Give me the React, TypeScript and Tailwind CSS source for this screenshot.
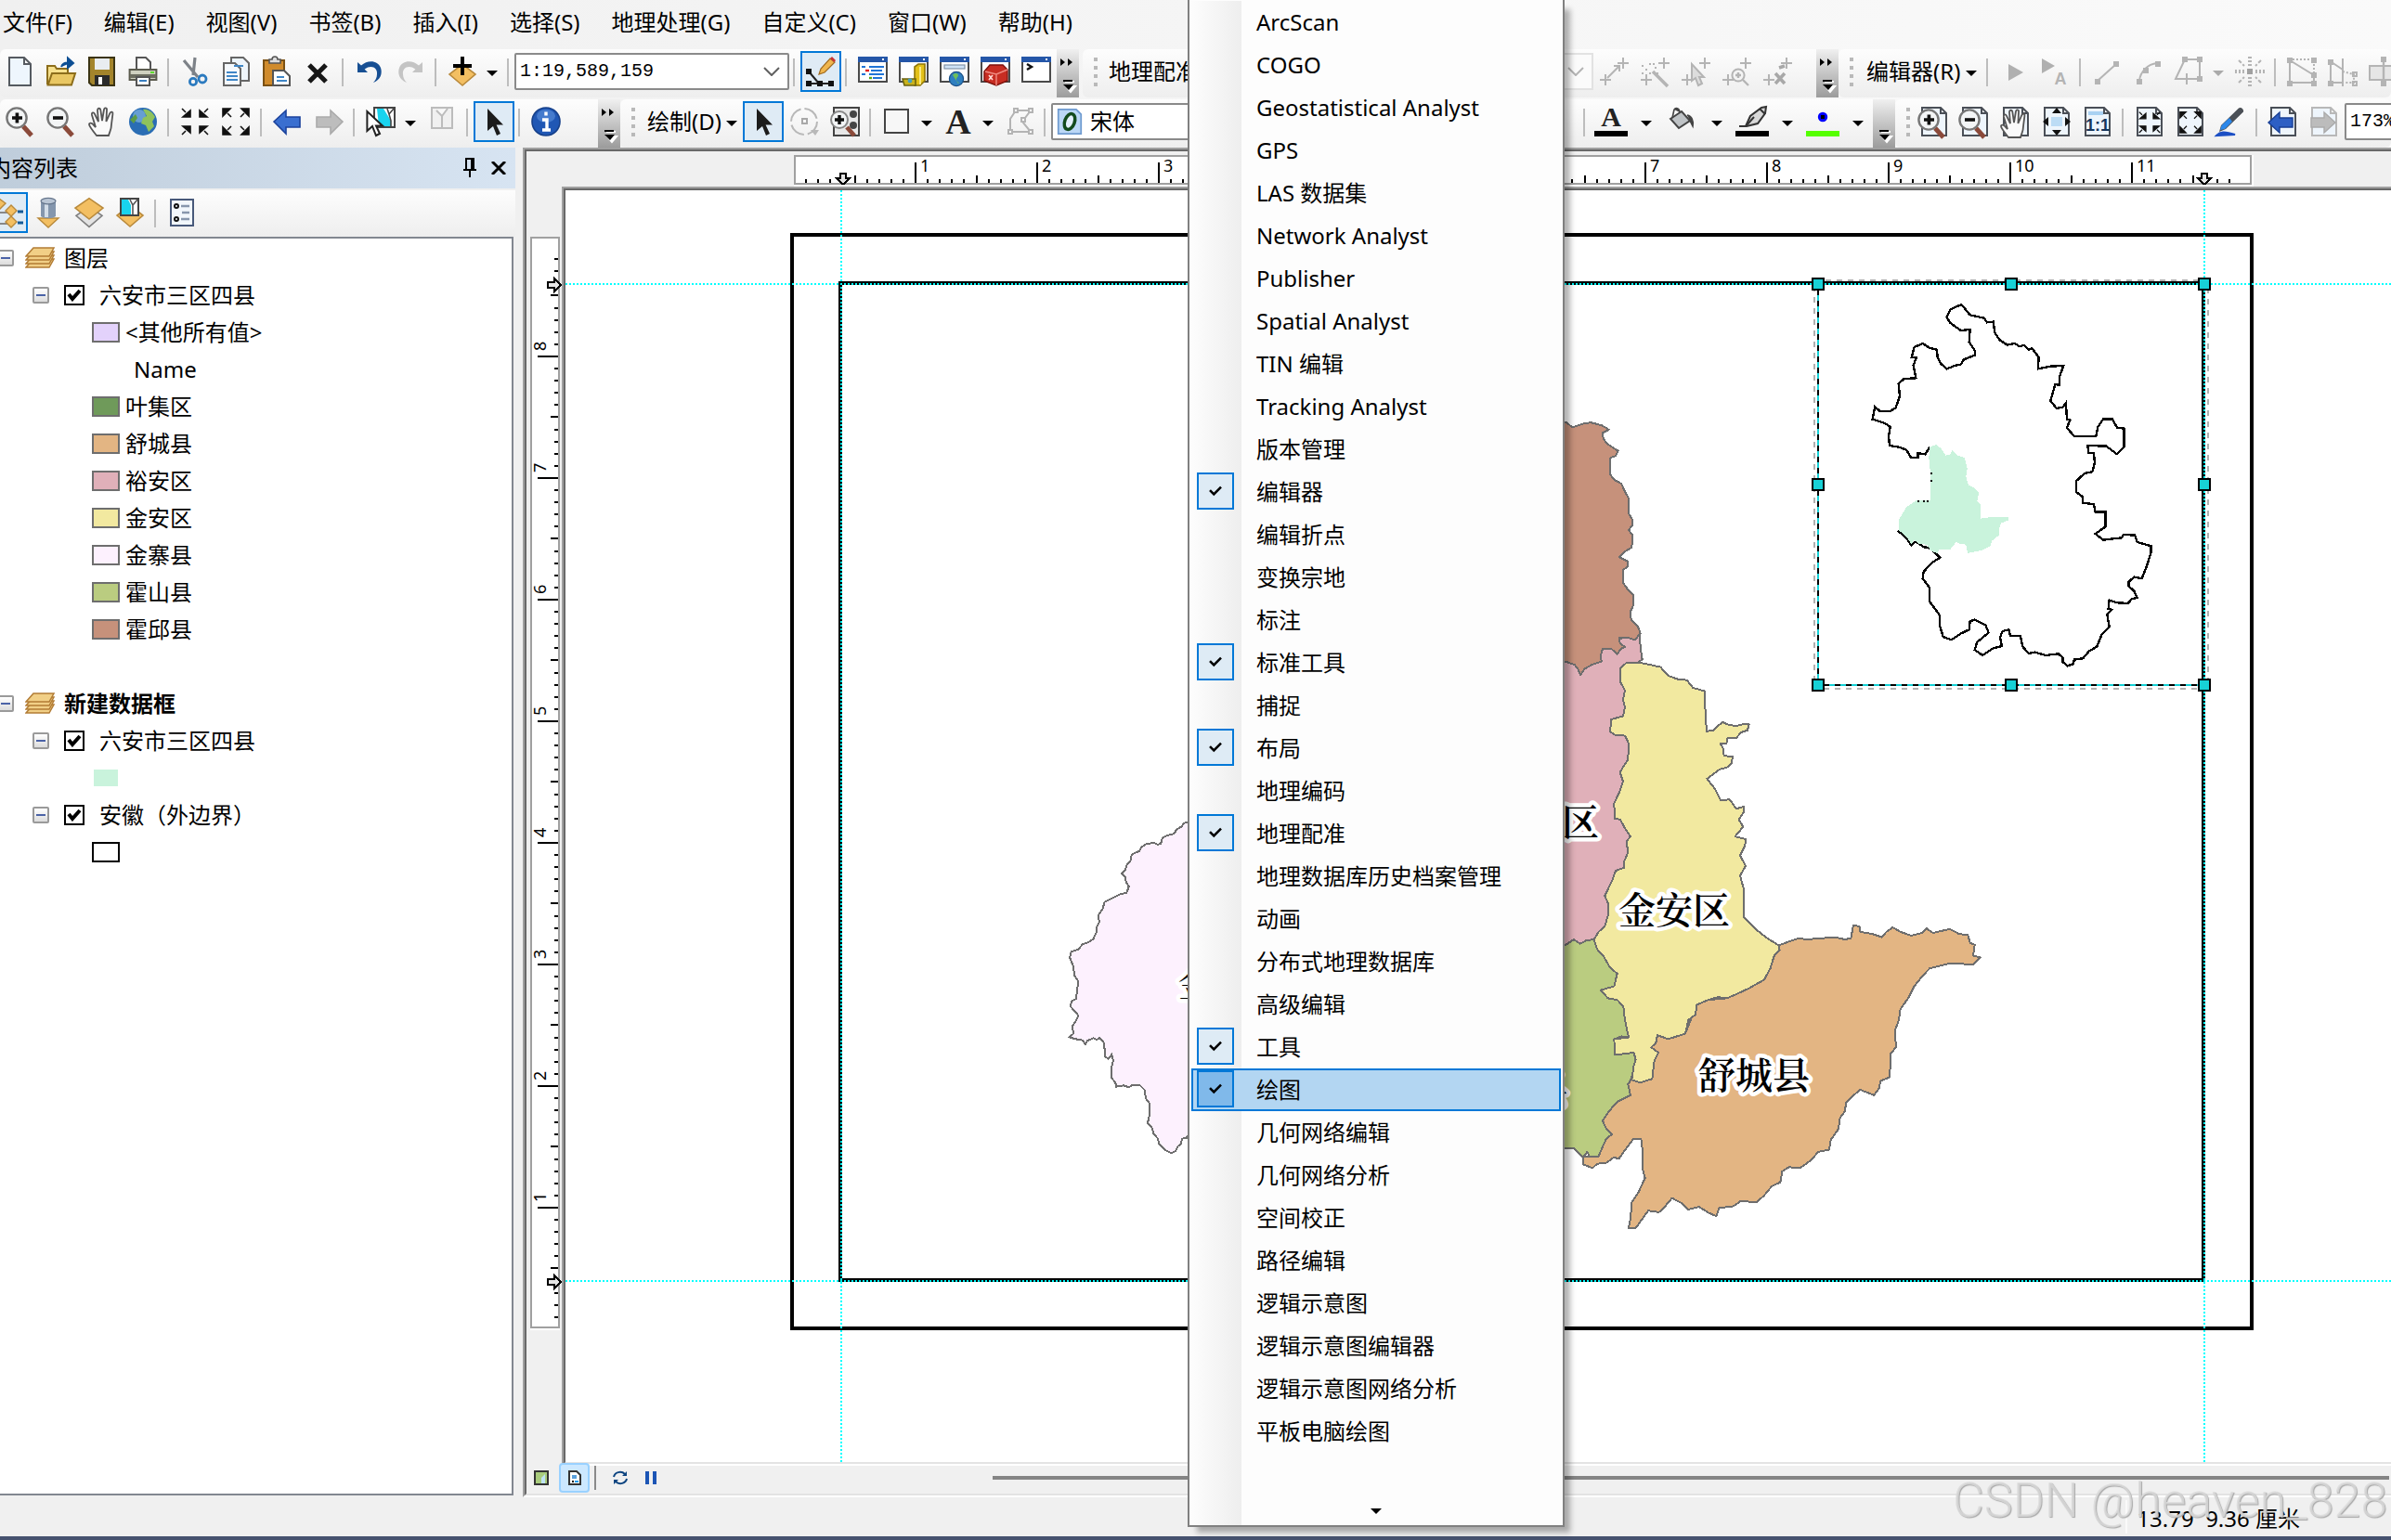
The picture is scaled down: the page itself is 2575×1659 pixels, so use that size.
import type { ReactNode } from "react";
import clsx from "clsx";

const MENUS = ["文件(F)", "编辑(E)", "视图(V)", "书签(B)", "插入(I)", "选择(S)", "地理处理(G)", "自定义(C)", "窗口(W)", "帮助(H)"];

const TOOLBARS: { name: string; checked?: boolean; active?: boolean }[] = [
  { name: "ArcScan" },
  { name: "COGO" },
  { name: "Geostatistical Analyst" },
  { name: "GPS" },
  { name: "LAS 数据集" },
  { name: "Network Analyst" },
  { name: "Publisher" },
  { name: "Spatial Analyst" },
  { name: "TIN 编辑" },
  { name: "Tracking Analyst" },
  { name: "版本管理" },
  { name: "编辑器", checked: true },
  { name: "编辑折点" },
  { name: "变换宗地" },
  { name: "标注" },
  { name: "标准工具", checked: true },
  { name: "捕捉" },
  { name: "布局", checked: true },
  { name: "地理编码" },
  { name: "地理配准", checked: true },
  { name: "地理数据库历史档案管理" },
  { name: "动画" },
  { name: "分布式地理数据库" },
  { name: "高级编辑" },
  { name: "工具", checked: true },
  { name: "绘图", checked: true, active: true },
  { name: "几何网络编辑" },
  { name: "几何网络分析" },
  { name: "空间校正" },
  { name: "路径编辑" },
  { name: "逻辑示意图" },
  { name: "逻辑示意图编辑器" },
  { name: "逻辑示意图网络分析" },
  { name: "平板电脑绘图" },
];

const PageShape = ({ stroke = "#4a4f57" }: { stroke?: string }) => (
  <path d="M1.5 .5h10l3 3v12h-13z M11.5 .5v3h3" fill="#eef5fc" stroke={stroke} />
);
const WindowShape = () => (
  <>
    <rect x=".5" y="1.5" width="15" height="12" fill="#fff" stroke="#4a4a4a" />
    <rect x="0" y="0" width="16" height="3" fill="#2456a8" />
    <rect x="13" y="1" width="1" height="1" fill="#fff" />
  </>
);
const Lens = ({ plus }: { plus?: boolean }) => (
  <>
    <path d="M9.5 10.5l4.500 5" stroke="#8b4a3a" strokeWidth="2.500" />
    <circle cx="6" cy="6" r="5.300" fill="#f3f5f6" stroke="#777" strokeWidth="1.200" />
    <path d={plus ? "M3.500 6h5.500M6.200 3.300v5.500" : "M3.500 6h5.500"} stroke="#111" strokeWidth="1.800" />
  </>
);
const Cross = ({ x, y }: { x: number; y: number }) => (
  <path d={`M${x - 3} ${y}h6M${x} ${y - 3}v6`} stroke="#b4b4b4" fill="none" />
);
const Inward = () => (
  <path d="M1 1l2 2M5.500 2v3.500h-4zM15 1l-2 2M10.500 2v3.500h4zM1 15l2-2M5.500 14v-3.500h-4zM15 15l-2-2M10.500 14v-3.500h4z" fill="#111" stroke="#111" strokeWidth=".8" />
);
const Outward = () => (
  <path d="M5.500 5.500l-2-2M1 5v-4h4zM10.500 5.500l2-2M15 5v-4h-4zM5.500 10.500l-2 2M1 11v4h4zM10.500 10.500l2 2M15 11v4h-4z" fill="#111" stroke="#111" strokeWidth=".8" />
);
const Hand = () => (
  <path d="M5 15.500C3 13 1 10.500 1 9.500s1.500-1 2.500.5L4.500 11 2.500 4.500c-.3-1.500 1-1.700 1.500-.5L6 8 5.500 2c0-1.500 1.500-1.500 1.700 0L8 7.500 9 1.500c.3-1.300 1.700-1 1.500.3L10.200 8l2-4.500c.6-1.200 1.800-.7 1.500.5L13 9.500c0 3-1 4-1.500 6z" fill="#fafafa" stroke="#555" strokeWidth=".9" />
);
const Gem = ({ y = 0 }: { y?: number }) => (
  <path d={`M8 ${y + 15.500}L1 ${y + 9.500} 8 ${y + 4} 15 ${y + 9.500}z`} fill="#f3bf62" stroke="#b98a3c" strokeWidth=".8" />
);
const Pointer = ({ fill = "#1c1c1c" }: { fill?: string }) => (
  <path d="M4.500 1v12l3-2.500 2 5 2-1-2.200-4.700H13z" fill={fill} />
);
const G = "#b4b4b4";

const ICONS: Record<string, ReactNode> = {
  new: <path d="M2 .5h8l3.500 3.500v11.500H2z M10 .5V4h3.500" fill="#eef6fd" stroke="#555a60" />,
  open: (
    <>
      <path d="M.5 15V5h4l1 1.500h6V9" fill="#f6e08c" stroke="#8c6d1b" />
      <path d="M.8 15.300L3 9h12.500l-2 6.300z" fill="#e9c763" stroke="#8c6d1b" />
      <path d="M8 5.500C9 3 11 3 13 3.500M11.500 .8l3 2.700-3 2.500z" fill="#0d4f94" stroke="#0d4f94" />
    </>
  ),
  save: (
    <>
      <path d="M1 .5h13.500v15H2.500L1 14z" fill="#a3842c" stroke="#3b3414" />
      <rect x="4" y="1" width="8" height="6" fill="#e9edf1" />
      <rect x="4" y="10" width="8" height="5.500" fill="#2b2b2b" />
      <rect x="6" y="11" width="2" height="4" fill="#fff" />
    </>
  ),
  print: (
    <>
      <path d="M4.500 8V.5h5l2.500 2.500v5" fill="#fff" stroke="#555" />
      <path d="M.8 7h14.400v5.500H.8z" fill="#cfd0bf" stroke="#5b5b4e" />
      <rect x="1" y="9.500" width="14" height="2" fill="#6c6d5f" />
      <path d="M4.500 11h7v4.500h-7z" fill="#fff" stroke="#555" />
      <path d="M6 13h4" stroke="#3a7fc0" />
      <rect x="12" y="8" width="2" height="1" fill="#5fdc2f" />
    </>
  ),
  cut: (
    <>
      <path d="M2 2l7.500 9M8 .5L7 10" stroke="#7d8288" strokeWidth="1.600" />
      <circle cx="12" cy="12" r="2" fill="none" stroke="#2b7abf" strokeWidth="1.400" />
      <circle cx="7" cy="13.500" r="1.800" fill="none" stroke="#2b7abf" strokeWidth="1.400" />
    </>
  ),
  copy: (
    <>
      <path d="M5.500 .5h6.500l3 3V13H5.500z" fill="#eef5fb" stroke="#666" />
      <path d="M1.500 3.500h6l3 3v9h-9z" fill="#f5f9fd" stroke="#666" />
      <path d="M3 8.500h5.500M3 10.500h6M3 12.500h6M7 5h5" stroke="#3f86c6" />
    </>
  ),
  paste: (
    <>
      <rect x="1" y="2" width="11" height="13.500" fill="#d08b2c" stroke="#7a5013" />
      <path d="M4 3.500V1.500h1.500a1.500 1.500 0 013 0H10v2z" fill="#ddd" stroke="#555" strokeWidth=".8" />
      <path d="M6 7.500h6l3 3v5H6z" fill="#fff" stroke="#555" />
      <path d="M8 11h4M8 13h5.500" stroke="#3f86c6" />
    </>
  ),
  delete: <path d="M3.500 4.500l9 9M12.500 4.500l-9 9" stroke="#161616" strokeWidth="2.600" />,
  undo: <path d="M1.500 3v5.500H7L5.300 6.700C9 4 12.500 6 12 9.500c0 2-1 3.500-2 4.500 4-1.500 5-5 4-8C12.500 2 7 1.500 3.500 4.800z" fill="#174f93" />,
  redo: <path d="M14.500 3v5.500H9l1.700-1.800C7 4 3.500 6 4 9.500c0 2 1 3.500 2 4.500-4-1.500-5-5-4-8C3.500 2 9 1.500 12.500 4.800z" fill="#c4c4c4" />,
  addData: (
    <>
      <Gem />
      <path d="M8 0v10M3 5h10" stroke="#000" strokeWidth="2" />
    </>
  ),
  sketch: (
    <>
      <path d="M1.500 8l5.500 6.500M1.500 14.500h12" stroke="#222" />
      <path d="M0 6.500h3v3H0zM0 13h3v3H0zM6 13h3v3H6zM12 13h3v3h-3z" fill="#111" />
      <path d="M7 9.500l1-3L13 1l2.500 2L10 8.500z" fill="#f0b64e" stroke="#a06a20" strokeWidth=".6" />
      <path d="M13 1l1-1 2 2-.8 1z" fill="#c93434" />
    </>
  ),
  winToc: (
    <>
      <WindowShape />
      <path d="M2 5.500h2M6 5.500h8M2 9.500h2M6 9.500h8" stroke="#1f74d6" />
      <path d="M4 7.500h2" stroke="#e02020" strokeWidth="1.200" />
      <path d="M7 7.500h6M8 11.500h5" stroke="#1f74d6" />
      <path d="M6 11.500h1.500" stroke="#58a618" strokeWidth="1.200" />
    </>
  ),
  winCatalog: (
    <>
      <WindowShape />
      <path d="M8.500 5.500l2-1.500h3.500v9l-2.500 2.500h-3z" fill="#e3c11a" stroke="#8f7608" strokeWidth=".8" />
      <path d="M11.500 5.500v9.500" stroke="#fff3a0" strokeWidth=".8" />
      <path d="M2 12h7v3.500H3z" fill="#c9b21c" stroke="#6a6210" strokeWidth=".8" />
      <circle cx="6" cy="13" r="1.200" fill="#48a0c0" />
    </>
  ),
  winSearch: (
    <>
      <WindowShape />
      <rect x="2.500" y="4.500" width="11" height="2" fill="#cfe3f7" stroke="#8494a8" strokeWidth=".6" />
      <circle cx="9" cy="12" r="3.800" fill="#2f7fc0" stroke="#1a4f86" strokeWidth=".6" />
      <path d="M7 10c1-1.500 3-1 3 0s-1 1-1 2.500 2 1 1 2" fill="#6fbf5a" />
    </>
  ),
  winToolbox: (
    <>
      <WindowShape />
      <path d="M2 8l3-3.500h7L14.500 7v6l-6 2.500L2 13z" fill="#c72d22" stroke="#7e120c" strokeWidth=".7" />
      <path d="M2.500 8l6 1.500 6-2.500M8.500 9.500v6" stroke="#f08a80" strokeWidth=".7" fill="none" />
      <path d="M4.500 10l2 2.500M6.500 10l-2 2.500" stroke="#ffd9d4" strokeWidth=".8" />
    </>
  ),
  winPython: (
    <>
      <WindowShape />
      <path d="M3 4l2.500 1.500L3 7" fill="none" stroke="#111" strokeWidth="1.200" />
    </>
  ),
  zoomIn: <Lens plus />,
  zoomOut: <Lens />,
  hand: <Hand />,
  globe: (
    <>
      <circle cx="8" cy="8" r="7.500" fill="#2a6db4" />
      <circle cx="6" cy="5" r="3.500" fill="#8fc0e8" opacity=".6" />
      <path d="M8 1.500c3-.5 5 1.500 6.500 4L13 8l1 2.500-3 3-1.500-3.500-2.500-1 1-3 2-1z" fill="#8fc25c" />
      <path d="M1 7l3-3 1 2-2 3z" fill="#5d9c46" />
    </>
  ),
  fixedIn: <Inward />,
  fixedOut: <Outward />,
  back: <path d="M.5 8L7 2v3.500h7.500v5.500H7v3.500z" fill="#3a6fd0" stroke="#1b429c" strokeWidth=".8" />,
  forward: <path d="M15.500 8L9 2v3.500H1.500v5.500H9v3.500z" fill="#bdbdbd" stroke="#aaa" strokeWidth=".8" />,
  selectFeatures: (
    <>
      <rect x="4.500" y=".5" width="11" height="10.500" fill="#fff" stroke="#444" />
      <path d="M6 1h3.500l4 6.500v3H7z" fill="#19d3ee" />
      <path d="M11.500 1l1 3 2.500-3M12.500 4l1 3.500v3" stroke="#444" fill="none" strokeWidth=".8" />
      <path d="M.7 2.500v10.500L3.500 10.500l2 5 2-1-2-4.300H9z" fill="#fff" stroke="#222" />
    </>
  ),
  clearSelection: <path d="M2.500 .5h11v11h-11zM5 2l3 3 3-4M8 5v6" fill="#f0f0f0" stroke="#bcbcbc" />,
  pointer: <Pointer />,
  info: (
    <>
      <circle cx="8" cy="8" r="7.500" fill="#2057b4" stroke="#16408a" strokeWidth=".8" />
      <ellipse cx="8" cy="5" rx="5" ry="3.500" fill="#5f93de" opacity=".6" />
      <path d="M8 2.800v2M6 7h2.500v5M6 12.500h4.500" stroke="#fff" strokeWidth="1.700" fill="none" />
    </>
  ),
  rotate: (
    <>
      <circle cx="8" cy="8" r="7" fill="none" stroke="#b8b8b8" strokeDasharray="9 2" />
      <rect x="7" y="6.500" width="2.500" height="2.500" fill="none" stroke="#a8a8a8" />
      <path d="M11.500 12.500h4.500l-2 3z" fill="#b8b8b8" />
    </>
  ),
  zoomSelected: (
    <>
      <rect x="2" y=".5" width="13.500" height="15" fill="#e8e8e8" stroke="#444" />
      <circle cx="12.500" cy="4" r="2" fill="#444" />
      <circle cx="12.500" cy="10" r="2" fill="#444" />
      <path d="M9 11l4 4.500" stroke="#8b4a3a" strokeWidth="2.400" />
      <circle cx="5" cy="7" r="4.500" fill="#f3f5f6" stroke="#888" />
      <path d="M2.500 7h5M5 4.500v5" stroke="#111" strokeWidth="1.700" />
    </>
  ),
  rectangle: <rect x="1.500" y="1.500" width="12.500" height="12.500" fill="#f7f7f7" stroke="#444" />,
  letterA: (
    <text x="8" y="14.500" textAnchor="middle" className="font-['Liberation_Serif'] font-bold" fontSize="19" fill="#222">
      A
    </text>
  ),
  editVertices: (
    <>
      <path d="M3 13.500v-7l3-4.500h8l-4.500 6 4.500 5.500z" fill="none" stroke={G} />
      <path d="M5 1h2v2H5zM13 1h2v2h-2zM9 6h2v2H9zM2 12.500h2v2H2zM13 12.500h2v2h-2z" fill="#fff" stroke={G} />
    </>
  ),
  addPoint: (
    <>
      <Cross x={13} y={3.5} />
      <Cross x={3.5} y={12.5} />
      <path d="M4.500 11.500L11 5M8 5h3v3" fill="none" stroke={G} />
    </>
  ),
  wandPoint: (
    <>
      <Cross x={13} y={3.5} />
      <Cross x={3.5} y={12.5} />
      <path d="M7 8l8 8" stroke={G} strokeWidth="1.800" />
      <path d="M1 5h1M3 7h1M5 4h1M8 6h1M1 9h1M5 9h1M9 9h1M7 4h1" stroke={G} />
    </>
  ),
  selectPoint: (
    <>
      <Cross x={13} y={3.5} />
      <Cross x={3.5} y={12.5} />
      <path d="M6 4v9l2-1.500 1.500 4 2-1L10 11h2.500z" fill="#ddd" stroke={G} />
    </>
  ),
  zoomPoint: (
    <>
      <Cross x={13} y={3.5} />
      <Cross x={3.5} y={12.5} />
      <circle cx="9" cy="10" r="3.300" fill="#f4f4f4" stroke={G} />
      <path d="M7.500 10h3M9 8.500v3M11.500 12.500l3 3" stroke={G} strokeWidth="1.200" />
    </>
  ),
  deletePoint: (
    <>
      <Cross x={13} y={3.5} />
      <Cross x={3.5} y={12.5} />
      <path d="M7 9l5 5.500M12 9l-5 5.500M9 6l3-1" stroke="#a8a8a8" strokeWidth="1.800" />
    </>
  ),
  fontColor: (
    <>
      <text x="8" y="10.500" textAnchor="middle" className="font-['Liberation_Serif'] font-bold" fontSize="15" fill="#222">
        A
      </text>
      <rect x="-1" y="13" width="18" height="3" fill="#000" />
    </>
  ),
  fillColor: (
    <>
      <path d="M2 6.500l6-4 4.500 5-6 4z" fill="#bfc3c6" stroke="#444" />
      <path d="M4 1.500L3 6M4 1.500c1-1.500 3-.5 3 1.500M11 4.500c2.500.5 3.500 3 3 6l-2-4" fill="#444" stroke="#444" strokeWidth=".8" />
    </>
  ),
  lineColor: (
    <>
      <path d="M1 10.500h3.500L7 5l6-4.500L15.500 0 15 3.500l-4 5.500-6 1.500z" fill="#d8d8d8" stroke="#333" />
      <path d="M5 10l4-4.500M12 1l3 3" stroke="#333" />
      <rect x="-1" y="13" width="18" height="3" fill="#000" />
    </>
  ),
  markerColor: (
    <>
      <circle cx="8" cy="5.500" r="2.600" fill="#0000ff" />
      <rect x="7" y="4.500" width="2" height="2" fill="#000" />
      <rect x="-1" y="13" width="18" height="3" fill="#55ff00" />
    </>
  ),
  pageZoomIn: (
    <>
      <PageShape />
      <g transform="translate(-1 1)">
        <Lens plus />
      </g>
    </>
  ),
  pageZoomOut: (
    <>
      <PageShape />
      <g transform="translate(-1 1)">
        <Lens />
      </g>
    </>
  ),
  pageHand: (
    <>
      <PageShape />
      <g transform="translate(-1 1)">
        <Hand />
      </g>
    </>
  ),
  pageFull: (
    <>
      <PageShape />
      <rect x="5" y="5.500" width="6" height="5" fill="#bcdcf5" />
      <path d="M8 .5l2.500 3h-5zM8 15.500l2.500-3h-5zM.5 8l3-2.500v5zM15.500 8l-3-2.500v5z" fill="#111" />
    </>
  ),
  pageActual: (
    <>
      <PageShape />
      <rect x="3" y="2.500" width="8" height="2" fill="#a9d1f2" />
      <text x="8" y="13" textAnchor="middle" className="font-['Liberation_Sans'] font-bold" fontSize="9" fill="#16365c">
        1:1
      </text>
    </>
  ),
  pageIn: (
    <>
      <PageShape />
      <g transform="translate(1.600 2) scale(.8)">
        <Inward />
      </g>
    </>
  ),
  pageOut: (
    <>
      <PageShape />
      <g transform="translate(1.600 2) scale(.8)">
        <Outward />
      </g>
    </>
  ),
  draftPen: (
    <>
      <path d="M0 15.500c2-2 4-2.500 10-.5z" fill="#1c4fc4" stroke="#1c4fc4" />
      <path d="M1.500 13.500l1-3.500L12 .8c1-1 3 .5 2.500 2L5 12z" fill="#4b5056" />
      <path d="M2 12.500l.8-2.500L7 6l1.500 2-4 4z" fill="#2b87ea" />
    </>
  ),
  pageBack: (
    <>
      <PageShape />
      <path d="M0 8.500L6 3v3h7v5H6v3z" fill="#2d5fc4" stroke="#173e94" strokeWidth=".7" />
    </>
  ),
  pageForward: (
    <>
      <PageShape stroke="#b8b8b8" />
      <path d="M14 8.500L8 3v3H1v5h7v3z" fill="#bcbcbc" stroke="#aaa" strokeWidth=".7" />
    </>
  ),
  editTool: <path d="M5 4v9l8-4.500z" fill="#b0b0b0" />,
  editAnnotation: (
    <>
      <path d="M1 1v8l7-4z" fill="#b0b0b0" />
      <text x="11" y="15" textAnchor="middle" className="font-['Liberation_Sans'] font-bold" fontSize="9" fill="#b4b4b4">
        A
      </text>
    </>
  ),
  straight: (
    <>
      <path d="M3 13L13 4" stroke={G} />
      <path d="M1.500 12h3v3h-3zM11.500 2.500h3v3h-3z" fill={G} />
    </>
  ),
  arc: (
    <>
      <path d="M3.500 13C4 8 8 4 13 3.500" stroke={G} fill="none" />
      <path d="M2 12h3v3H2zM5.500 6h3v3h-3zM12 2.500h3v3h-3z" fill={G} />
    </>
  ),
  trace: (
    <>
      <path d="M6 1.500h8V12h-4M6 1.500L1 12h3" stroke={G} fill="none" />
      <path d="M4.500 0h3v3h-3zM12.500 0h3v3h-3zM12.500 10.500h3v3h-3z" fill={G} />
      <path d="M7 9v6M4 12h6" stroke={G} />
    </>
  ),
  point: (
    <>
      <path d="M8 0v5M8 11v5M0 8h5M11 8h5" stroke={G} strokeWidth="2" strokeDasharray="1 1" />
      <path d="M2 2l3 3M14 2l-3 3M2 14l3-3M14 14l-3-3" stroke={G} strokeDasharray="2 1" />
      <rect x="6.500" y="6.500" width="3" height="3" fill="#a0a0a0" />
    </>
  ),
  editShape: (
    <>
      <path d="M1.500 2v12h13v-4z" stroke={G} fill="none" />
      <path d="M3 1.500h11.500V9" stroke={G} strokeDasharray="1 1" fill="none" />
      <path d="M0 .5h3v3H0zM0 13h3v3H0zM13 13h3v3h-3zM13 8.500h3v3h-3zM13 .5h3v3h-3z" fill={G} />
    </>
  ),
  reshape: (
    <>
      <path d="M1.500 2.500v11.500H8M2 3l6 4M8 1v15" stroke={G} fill="none" />
      <path d="M8 8l6 1.500v4.500H9" stroke={G} strokeDasharray="1 1" fill="none" />
      <path d="M0 1.500h3v3H0zM0 13h3v3H0z" fill={G} />
      <path d="M13.500 8.500h2v2h-2zM13.500 13.500h2v2h-2z" fill="none" stroke={G} />
    </>
  ),
  split: (
    <>
      <rect x=".5" y="5" width="16" height="7.500" fill="#e6e6e6" stroke={G} />
      <path d="M8 1v15" stroke={G} strokeWidth="1.200" />
      <path d="M6.500 0h3v3h-3zM6.500 13h3v3h-3z" fill={G} />
    </>
  ),
  byOrder: (
    <>
      <path d="M2 5v9h6M2 8h6" stroke="#888" fill="none" />
      <path d="M3 0l4 3-4 4-4-4zM10 4l3 3-3 3-3-3zM10 10l3 3-3 3-3-3z" fill="#f3bf62" stroke="#b98a3c" strokeWidth=".7" />
      <path d="M13.500 7.500h3M13.500 13.500h3" stroke="#155a96" strokeWidth="1.600" />
    </>
  ),
  bySource: (
    <>
      <path d="M2.500 11h11L8 16z" fill="#f3bf62" stroke="#b98a3c" strokeWidth=".7" />
      <path d="M4 1.500v8.500c2 1.500 6 1.500 8 0V1.500z" fill="#8496ad" />
      <path d="M6 2v8.500h2V2z" fill="#d3dde8" />
      <ellipse cx="8" cy="1.800" rx="4" ry="1.600" fill="#b9c5d4" stroke="#66768c" strokeWidth=".6" />
    </>
  ),
  byVisibility: (
    <>
      <path d="M8 15.700l-7-6 7-5 7 5z" fill="#e3e3e3" stroke="#808080" strokeWidth=".8" />
      <path d="M8 11.500l-7.500-6L8 .3l7.500 5.200z" fill="#f3bf62" stroke="#b98a3c" strokeWidth=".8" />
    </>
  ),
  bySelection: (
    <>
      <Gem />
      <rect x="3" y=".5" width="9.500" height="9" fill="#fff" stroke="#444" />
      <path d="M3.500 1H7l1.500 3v5h-5z" fill="#19d3ee" />
      <path d="M8 1l1.500 3 2.500-3M9.500 4v5" fill="none" stroke="#555" strokeWidth=".8" />
    </>
  ),
  options: (
    <>
      <rect x="2" y="1" width="12" height="14" fill="#f2f7fc" stroke="#48597a" />
      <circle cx="5" cy="4.500" r="1" fill="none" stroke="#111" />
      <circle cx="5" cy="11.500" r="1" fill="none" stroke="#111" />
      <path d="M7.500 4.500H12M8 8h4M7.500 11.500H12" stroke="#8796ad" strokeWidth="1.200" />
    </>
  ),
};

function Icon({ name }: { name: string }) {
  return (
    <svg viewBox="0 0 16 16" className="size-8 overflow-visible" aria-hidden="true">
      {ICONS[name]}
    </svg>
  );
}

function Tool({ name, active }: { name: string; active?: boolean }) {
  return (
    <button
      type="button"
      aria-label={name}
      className={clsx("flex size-11 shrink-0 items-center justify-center", active && "border-2 border-[#0078d7] bg-[#dfebf5]")}
    >
      <Icon name={name} />
    </button>
  );
}

function Sep() {
  return (
    <div className="h-11 w-3 shrink-0 py-2 pl-1">
      <div className="h-[30px] w-[2px] bg-[#bdbdbd]" />
    </div>
  );
}

function Triangle({ fill = "#000" }: { fill?: string }) {
  return (
    <svg viewBox="0 0 12 6" className="h-[6px] w-3" aria-hidden="true">
      <path d="M0 0h12L6 6z" fill={fill} />
    </svg>
  );
}

function Drop({ fill, wide }: { fill?: string; wide?: boolean }) {
  return (
    <button type="button" aria-label="more" className={clsx("flex h-11 shrink-0 items-center pt-1", wide ? "w-8 pl-[10px]" : "w-[22px] pl-1")}>
      <Triangle fill={fill} />
    </button>
  );
}

function Grip() {
  return (
    <div className="flex h-11 w-7 shrink-0 flex-col items-center justify-center gap-[5px]">
      {[0, 1, 2, 3].map((i) => (
        <span key={i} className="size-1 bg-[#b9b9b9]" />
      ))}
    </div>
  );
}

function Overflow({ arrows = true }: { arrows?: boolean }) {
  return (
    <button type="button" aria-label="overflow" className="-mt-[2px] h-[52px] w-6 shrink-0 bg-linear-to-b from-[#f0f0f0] to-[#9c9c9c]">
      <svg viewBox="0 0 24 52" className="h-[52px] w-6">
        {arrows && <path d="M4 10l5 4-5 4zM12 10l5 4-5 4z" />}
        <path d="M9 35h10M10 40h10l-5 6z" stroke="#fff" fill="#fff" strokeWidth="2" />
        <path d="M7 33h10v2H7zM7 38h11l-5 6z" />
      </svg>
    </button>
  );
}

function Bar({ className, children }: { className?: string; children: ReactNode }) {
  return (
    <div className={clsx("flex h-[52px] shrink-0 items-start rounded-md bg-linear-to-b from-[#fdfdfd] to-[#eeeeee] pt-[2px]", className)}>
      {children}
    </div>
  );
}

function Chevron({ stroke }: { stroke: string }) {
  return (
    <svg viewBox="0 0 18 10" className="pointer-events-none h-[10px] w-[18px] shrink-0" fill="none" stroke={stroke} strokeWidth="2">
      <path d="M1 1l8 8 8-8" />
    </svg>
  );
}

function Combo({ value, label, className, icon }: { value: string; label: string; className: string; icon?: ReactNode }) {
  return (
    <label className={clsx("mt-[2px] flex h-10 shrink-0 items-center rounded-xs border-2 border-[#8a8a8a] bg-white", className)}>
      {icon}
      <select aria-label={label} className="min-w-0 flex-1 appearance-none bg-transparent">
        <option>{value}</option>
      </select>
      <Chevron stroke="#606060" />
    </label>
  );
}

function ToolbarDock() {
  return (
    <div className="flex flex-col gap-[2px] overflow-hidden">
      <div className="flex">
        <Bar>
          {["new", "open", "save", "print"].map((n) => <Tool key={n} name={n} />)}
          <Sep />
          {["cut", "copy", "paste", "delete"].map((n) => <Tool key={n} name={n} />)}
          <Sep />
          <Tool name="undo" />
          <Tool name="redo" />
          <Sep />
          <Tool name="addData" />
          <Drop />
          <Sep />
          <Combo value="1:19,589,159" label="scale" className="w-[296px] pl-1 pr-2 font-['Liberation_Mono',monospace] text-xl" />
          <Sep />
          <Tool name="sketch" active />
          <Sep />
          {["winToc", "winCatalog", "winSearch", "winToolbox", "winPython"].map((n) => <Tool key={n} name={n} />)}
          <Overflow />
        </Bar>
        <Bar className="ml-1 w-[814px]">
          <Grip />
          <button type="button" className="h-11 flex-1 text-left">地理配准</button>
          <div className="mt-[2px] flex h-10 w-12 items-center justify-end border-2 border-[#e2e2e2] bg-[#fbfbfb] pr-2">
            <Chevron stroke="#b4b4b4" />
          </div>
          {["addPoint", "wandPoint", "selectPoint", "zoomPoint", "deletePoint"].map((n) => <Tool key={n} name={n} />)}
          <div className="w-5 shrink-0" />
          <Overflow />
        </Bar>
        <Bar className="min-w-0 flex-1">
          <Grip />
          <button type="button" className="h-11 shrink-0 px-[2px]">编辑器(R)</button>
          <Drop />
          <Sep />
          <Tool name="editTool" />
          <Tool name="editAnnotation" />
          <Sep />
          <Tool name="straight" />
          <Tool name="arc" />
          <Tool name="trace" />
          <Drop fill="#aaa" />
          <Tool name="point" />
          <Sep />
          <Tool name="editShape" />
          <Tool name="reshape" />
          <Tool name="split" />
        </Bar>
      </div>
      <div className="flex">
        <Bar className="w-[668px]">
          {["zoomIn", "zoomOut", "hand", "globe"].map((n) => <Tool key={n} name={n} />)}
          <Sep />
          <Tool name="fixedIn" />
          <Tool name="fixedOut" />
          <Sep />
          <Tool name="back" />
          <Tool name="forward" />
          <Sep />
          <Tool name="selectFeatures" />
          <Drop />
          <Tool name="clearSelection" />
          <Sep />
          <Tool name="pointer" active />
          <Sep />
          <Tool name="info" />
          <div className="flex-1" />
          <Overflow />
        </Bar>
        <Bar className="w-[1373px]">
          <Grip />
          <button type="button" className="h-11 shrink-0 px-[1px]">绘制(D)</button>
          <Drop />
          <Tool name="pointer" active />
          <Tool name="rotate" />
          <Tool name="zoomSelected" />
          <Sep />
          <Tool name="rectangle" />
          <Drop />
          <Tool name="letterA" />
          <Drop />
          <Tool name="editVertices" />
          <Sep />
          <Combo
            value="宋体"
            label="font"
            className="w-[300px] gap-2 px-1"
            icon={
              <svg viewBox="0 0 16 16" className="size-7 shrink-0">
                <path d="M1 .5h11l3 3v12H1z" fill="#bcd8f6" stroke="#6f9bd0" />
                <ellipse cx="8" cy="8" rx="3" ry="5" fill="#e4f0fc" stroke="#134b1c" strokeWidth="2" transform="rotate(20 8 8)" />
              </svg>
            }
          />
          <div className="flex-1" />
          <Sep />
          <Tool name="fontColor" />
          <Drop wide />
          <Tool name="fillColor" />
          <Drop wide />
          <Tool name="lineColor" />
          <Drop wide />
          <Tool name="markerColor" />
          <Drop wide />
          <Overflow arrows={false} />
        </Bar>
        <Bar className="min-w-0 flex-1">
          <Grip />
          <div className="-ml-2 flex">
            {["pageZoomIn", "pageZoomOut", "pageHand", "pageFull", "pageActual"].map((n) => <Tool key={n} name={n} />)}
            <Sep />
            {["pageIn", "pageOut", "draftPen"].map((n) => <Tool key={n} name={n} />)}
            <Sep />
            <Tool name="pageBack" />
            <Tool name="pageForward" />
            <Combo value="173%" label="zoom" className="w-32 pl-1 font-['Liberation_Mono',monospace] text-xl" />
          </div>
        </Bar>
      </div>
    </div>
  );
}

function Expander() {
  return (
    <button type="button" aria-label="collapse" className="flex size-[18px] shrink-0 items-center justify-center rounded-xs border-2 border-[#9a9a9a] bg-linear-to-b from-white to-[#dcdcdc]">
      <span className="h-[2px] w-[10px] bg-[#4b63a7]" />
    </button>
  );
}

function FrameRow({ label, bold }: { label: string; bold?: boolean }) {
  return (
    <li className={clsx("flex h-10 items-center", bold && "font-bold")}>
      <span className="-ml-[3px] flex">
        <Expander />
      </span>
      <svg viewBox="0 0 32 24" className="ml-3 h-6 w-8 shrink-0">
        {[13, 9, 5, 1].map((y) => (
          <path key={y} d={`M9 ${y}h22l-5 9H1z`} fill="#f1cf86" stroke="#b27c35" strokeWidth="1.500" />
        ))}
      </svg>
      <span className="ml-[10px]">{label}</span>
    </li>
  );
}

function LayerRow({ label }: { label: string }) {
  return (
    <li className="flex h-10 items-center pl-[35px]">
      <Expander />
      <label className="ml-4 flex items-center gap-4">
        <span className="grid size-[22px] place-items-center">
          <input type="checkbox" defaultChecked className="col-start-1 row-start-1 size-[22px] appearance-none border-2 border-black bg-white" />
          <svg viewBox="0 0 16 14" className="pointer-events-none col-start-1 row-start-1 h-[14px] w-4">
            <path d="M2 6l4 5 8-9" fill="none" stroke="#000" strokeWidth="4" />
          </svg>
        </span>
        {label}
      </label>
    </li>
  );
}

function SymbolRow({ label, swatch }: { label?: string; swatch: string }) {
  return (
    <li className="flex h-10 items-center gap-[6px] pl-[99px]">
      <span className={clsx("h-[22px] w-[30px] shrink-0", swatch)} />
      {label}
    </li>
  );
}

function TableOfContents() {
  return (
    <aside className="flex w-[555px] shrink-0 flex-col overflow-hidden">
      <header className="flex h-11 shrink-0 items-center bg-linear-to-r from-[#bfcddb] to-[#d7e4f2] pr-[10px]">
        <h2 className="-ml-3 flex-1">内容列表</h2>
        <button type="button" aria-label="pin" className="mr-4">
          <svg viewBox="0 0 14 22" className="h-[22px] w-[14px]" fill="none" stroke="#000" strokeWidth="2">
            <path d="M3 1h8v12H3zM0 13h14M7 13v8M9 1v12" />
          </svg>
        </button>
        <button type="button" aria-label="close">
          <svg viewBox="0 0 16 14" className="h-[14px] w-4" stroke="#000" strokeWidth="3">
            <path d="M1 0l14 14M15 0L1 14" />
          </svg>
        </button>
      </header>
      <div className="mt-[2px] flex h-[50px] shrink-0 bg-linear-to-b from-[#fdfdfd] to-[#eeeeee] pt-[2px]">
        <div className="-ml-[14px] flex">
          <Tool name="byOrder" active />
          <Tool name="bySource" />
          <Tool name="byVisibility" />
          <Tool name="bySelection" />
          <Sep />
          <Tool name="options" />
        </div>
      </div>
      <ul className="mb-[2px] mr-[2px] flex-1 border-y-2 border-r-2 border-[#828790] bg-white pt-px">
        <FrameRow label="图层" />
        <LayerRow label="六安市三区四县" />
        <SymbolRow label="<其他所有值>" swatch="border-2 border-[#6e6e6e] bg-[#e3d2fb]" />
        <li className="flex h-10 items-center pl-36">Name</li>
        <SymbolRow label="叶集区" swatch="border-2 border-[#6e6e6e] bg-[#6f9a5a]" />
        <SymbolRow label="舒城县" swatch="border-2 border-[#6e6e6e] bg-[#e3b583]" />
        <SymbolRow label="裕安区" swatch="border-2 border-[#6e6e6e] bg-[#e0b0b9]" />
        <SymbolRow label="金安区" swatch="border-2 border-[#6e6e6e] bg-[#f2e9a0]" />
        <SymbolRow label="金寨县" swatch="border-2 border-[#6e6e6e] bg-[#fdf1fe]" />
        <SymbolRow label="霍山县" swatch="border-2 border-[#6e6e6e] bg-[#bacc80]" />
        <SymbolRow label="霍邱县" swatch="border-2 border-[#6e6e6e] bg-[#c6917b]" />
        <li className="h-10" />
        <FrameRow label="新建数据框" bold />
        <LayerRow label="六安市三区四县" />
        <SymbolRow swatch="border-2 border-white bg-[#c9f3dc]" />
        <LayerRow label="安徽（外边界）" />
        <SymbolRow swatch="border-2 border-black bg-white" />
      </ul>
    </aside>
  );
}

const UNIT = 131;

function tickLength(i: number) {
  if (i % 10 === 0) return 22;
  return i % 5 === 0 ? 8 : 4;
}

function HorizontalRuler() {
  return (
    <div className="ml-72 mt-1 h-[34px] w-[1572px] border-b-2 border-r-2 border-white">
      <svg viewBox="0 0 1570 32" className="h-8 w-[1570px] bg-white font-['Noto_Sans',sans-serif] text-lg" shapeRendering="crispEdges">
        <rect x="1" y="1" width="1568" height="30" fill="#fff" stroke="#a0a0a0" strokeWidth="2" />
        {Array.from({ length: 118 }, (_, k) => k + 1).map((i) => (
          <rect key={i} x={Math.round((i * UNIT) / 10) - 1} y={30 - tickLength(i)} width="2" height={tickLength(i)} />
        ))}
        {[1, 2, 3, 7, 8, 9, 10, 11].map((n) => (
          <text key={n} x={n * UNIT + 5} y="18">{n}</text>
        ))}
        {[53, 1519].map((x) => (
          <path key={x} d={`M${x - 3} 20h6v5h4l-7 7-7-7h4z`} fill="#e6e6e6" stroke="#000" strokeWidth="2" />
        ))}
      </svg>
    </div>
  );
}

function VerticalRuler() {
  return (
    <div className="ml-1 mr-[2px] mt-[54px] h-[1178px] w-8 border-b-2 border-white">
      <svg viewBox="0 0 32 1176" className="h-[1176px] w-8 overflow-visible font-['Noto_Sans',sans-serif] text-lg" shapeRendering="crispEdges">
        <rect x="1" y="1" width="30" height="1174" fill="#fff" stroke="#a0a0a0" strokeWidth="2" />
        {Array.from({ length: 88 }, (_, k) => k + 1).map((i) => (
          <rect key={i} x={30 - tickLength(i)} y={1176 - Math.round((i * UNIT) / 10)} width={tickLength(i)} height="2" />
        ))}
        {Array.from({ length: 8 }, (_, k) => k + 1).map((n) => (
          <text key={n} transform={`translate(17 ${1171 - n * UNIT}) rotate(-90)`}>{n}</text>
        ))}
        {[52, 1126].map((y) => (
          <path key={y} d={`M19 ${y - 3}v6h7v4l7-7-7-7v4z`} fill="#e6e6e6" stroke="#000" strokeWidth="2" />
        ))}
      </svg>
    </div>
  );
}

function MapLabel({ x, y, children }: { x: number; y: number; children: string }) {
  return (
    <text x={x} y={y} fontSize="40" fill="#000" stroke="#fff" strokeWidth="9" strokeLinejoin="round" paintOrder="stroke" className="font-['Noto_Serif_CJK_SC','Noto_Sans_CJK_SC',serif] font-semibold">
      {children}
    </text>
  );
}

const HANDLES = [
  [1958, 306], [2166, 306], [2374, 306], [1958, 522], [2374, 522], [1958, 738], [2166, 738], [2374, 738],
];

function LayoutPage() {
  return (
    <svg viewBox="609 205 1966 1370" preserveAspectRatio="xMinYMin slice" className="size-full" shapeRendering="crispEdges">
      <rect x="853" y="253" width="1572" height="1178" fill="#fff" stroke="#000" strokeWidth="4" />
      <rect x="905" y="305" width="1468" height="1074" fill="#fff" stroke="#000" strokeWidth="4" />

      {/* 金寨县 */}
      <g transform="translate(1120 860) scale(.3827 .3333)">
        <path
          d="M440 65 420 78 405 80 398 92 385 100 378 114 358 120 345 128 340 146 332 150 322 144 300 147 285 158 280 170 258 182 254 205 245 214 240 232 230 242 240 255 242 270 250 285 244 305 225 310 205 322 182 335 176 358 164 378 167 400 160 415 158 435 150 455 135 466 120 472 108 488 88 496 84 515 93 540 97 572 108 592 104 625 102 648 90 655 85 672 98 688 108 702 100 722 90 738 95 760 83 772 100 778 120 782 128 795 133 784 150 775 160 780 168 774 180 790 184 835 192 842 202 828 206 848 200 875 200 902 212 918 215 932 235 928 250 934 262 926 280 926 294 942 298 970 308 985 308 1025 303 1050 315 1065 320 1085 332 1100 335 1118 350 1135 370 1147 382 1140 388 1125 396 1118 400 1100 412 1098 420 1085 440 1080z"
          fill="#fdf1fe" stroke="#6e6e6e" strokeWidth="2" vectorEffect="non-scaling-stroke"
        />
      </g>

      {/* eastern districts */}
      <g transform="translate(1670 430) scale(.3333 .5867)" stroke="#6e6e6e" strokeWidth="2" strokeLinejoin="round">
        <path
          vectorEffect="non-scaling-stroke" fill="#e0b0b9"
          d="M0 460 160 450 288 430 290 455 296 478 280 484 245 484 224 495 226 520 240 535 234 552 240 565 234 582 196 588 192 610 205 616 240 618 252 632 250 662 238 672 224 685 234 702 222 722 205 742 207 770 225 772 240 788 258 803 245 812 250 832 238 848 238 860 210 866 200 882 175 912 185 925 185 948 175 968 155 978 140 992 120 995 95 1000 75 992 45 1003 0 1003z"
        />
        <path
          vectorEffect="non-scaling-stroke" fill="#c6917b"
          d="M0 40 50 42 70 52 105 45 130 43 165 48 188 56 168 62 170 72 182 82 218 95 210 104 192 108 192 138 205 148 228 155 240 170 252 182 252 210 265 222 264 232 252 240 265 250 262 272 240 280 222 290 250 298 248 308 233 314 235 338 250 350 268 360 266 380 258 390 260 405 282 418 290 430 272 442 250 438 222 438 224 448 240 455 228 458 215 468 195 458 168 458 162 470 164 482 135 487 110 495 96 507 88 495 78 488 50 482 0 482z"
        />
        <path
          vectorEffect="non-scaling-stroke" fill="#bacc80"
          d="M0 1003 45 1003 60 998 75 992 95 1000 115 994 140 992 150 1010 170 1022 190 1042 215 1055 205 1078 162 1085 185 1100 215 1103 235 1115 240 1140 252 1172 230 1170 205 1175 208 1204 268 1200 275 1212 262 1245 250 1258 258 1278 215 1290 185 1310 168 1325 180 1340 198 1350 180 1358 170 1370 155 1390 125 1390 118 1382 105 1392 75 1375 0 1375z"
        />
        <path
          vectorEffect="non-scaling-stroke" fill="#e3b583"
          d="M737 1003 760 998 800 990 830 992 870 990 920 988 950 992 970 990 978 966 998 968 1000 978 1040 982 1070 988 1085 978 1105 970 1130 978 1165 985 1200 980 1215 972 1235 980 1290 973 1320 982 1348 984 1355 998 1370 1002 1365 1022 1388 1025 1365 1038 1290 1036 1225 1045 1200 1060 1175 1078 1155 1100 1130 1120 1125 1140 1112 1160 1116 1190 1098 1202 1096 1245 1065 1252 1062 1265 1045 1278 1000 1268 975 1280 955 1292 950 1308 935 1320 930 1340 905 1360 900 1378 865 1382 840 1398 805 1412 770 1410 748 1418 742 1438 715 1445 690 1462 665 1475 615 1472 590 1482 545 1485 535 1500 510 1494 480 1483 445 1488 420 1475 392 1467 370 1482 350 1493 315 1490 300 1502 275 1522 252 1522 258 1505 262 1475 285 1455 305 1430 298 1415 298 1385 292 1358 268 1358 245 1375 220 1395 205 1392 180 1402 150 1404 135 1412 105 1405 105 1390 155 1390 170 1370 180 1358 198 1350 180 1340 168 1325 185 1310 215 1290 258 1278 250 1258 262 1248 290 1255 328 1248 335 1215 348 1200 325 1190 345 1168 380 1175 435 1165 472 1112 510 1103 570 1100 640 1082 690 1066z"
        />
        <path
          vectorEffect="non-scaling-stroke" fill="#f2e9a0"
          d="M245 484 300 485 355 492 380 508 410 514 440 516 460 530 497 536 500 575 504 610 525 608 555 593 575 598 600 600 620 597 641 597 636 608 615 612 600 622 572 622 568 632 548 632 558 642 560 655 588 656 585 668 570 676 545 680 505 697 530 715 550 737 578 735 600 752 625 748 624 758 608 772 622 785 596 803 630 808 628 820 612 838 630 857 612 875 624 900 625 952 660 972 700 990 737 1003 740 1012 722 1022 710 1045 690 1066 640 1082 610 1090 570 1100 540 1098 510 1103 472 1112 468 1130 445 1140 435 1165 380 1175 345 1168 340 1182 325 1190 348 1200 335 1215 328 1248 290 1255 262 1250 268 1225 275 1212 268 1200 208 1204 205 1175 252 1172 240 1140 235 1115 215 1103 185 1100 162 1085 205 1078 215 1055 190 1042 170 1022 150 1010 140 992 155 978 175 968 185 948 185 925 175 912 200 882 210 866 238 860 238 848 250 832 245 812 258 803 240 788 225 772 207 770 205 742 222 722 234 702 224 685 238 672 250 662 252 632 240 618 205 616 192 610 196 588 234 582 240 565 234 552 240 535 226 520 224 495z"
        />
      </g>
      <MapLabel x={1269} y={1073}>金寨县</MapLabel>
      <MapLabel x={1602} y={900}>裕安区</MapLabel>
      <MapLabel x={1743} y={995}>金安区</MapLabel>
      <MapLabel x={1568} y={1188}>霍山县</MapLabel>
      <MapLabel x={1829} y={1173}>舒城县</MapLabel>

      {/* province inset */}
      <g transform="translate(1920 280) scale(.3333)">
        <path
          fill="none" stroke="#000" strokeWidth="7"
          d="M475 605 460 628 437 625 437 640 415 640 400 615 380 606 345 600 342 570 347 540 330 528 290 515 298 475 315 490 345 490 365 478 378 440 374 400 392 384 430 382 422 340 432 315 416 315 425 282 452 270 475 285 498 290 500 315 510 335 530 352 555 342 575 338 585 322 620 308 622 295 602 265 605 225 575 228 540 203 530 185 542 160 577 144 605 178 650 188 660 202 680 200 685 235 700 258 725 275 750 270 765 280 780 275 795 290 805 285 827 315 825 352 865 344 907 342 895 375 895 405 880 402 865 455 885 480 905 476 915 462 918 515 928 518 918 543 942 570 1012 570 1018 540 1035 515 1065 515 1080 542 1103 545 1103 605 1080 628 1045 602 985 600 988 625 1005 625 1008 655 1000 685 975 690 948 715 948 750 968 765 970 785 1005 790 1010 815 1043 815 1043 862 1010 885 1035 905 1095 898 1100 888 1138 890 1145 912 1190 925 1190 945 1176 990 1160 1030 1135 1025 1118 1040 1118 1055 1135 1070 1145 1092 1128 1096 1115 1110 1080 1108 1055 1100 1052 1128 1062 1130 1048 1145 1055 1185 1030 1212 1015 1250 990 1264 970 1288 942 1292 938 1306 920 1312 905 1300 905 1286 890 1273 850 1278 815 1268 795 1272 775 1250 768 1215 735 1215 730 1195 710 1200 702 1220 708 1248 680 1255 645 1278 620 1260 628 1235 665 1205 655 1180 620 1163 605 1168 602 1195 575 1208 545 1228 518 1218 508 1185 508 1150 475 1105 475 1060 452 1030 455 1008 480 980 508 962 490 945 472 930 455 928 430 910 415 922 400 900 372 875"
        />
        <path
          fill="#c9f3dc"
          d="M475 605 495 597 512 610 526 632 540 630 548 615 565 632 588 640 596 675 592 700 600 728 620 738 634 752 628 780 640 790 640 836 682 830 729 832 729 842 706 850 700 865 698 890 676 908 670 925 645 938 597 948 592 920 575 918 560 912 540 937 505 935 500 948 480 942 465 920 440 918 425 906 415 918 400 895 376 875 376 838 400 798 430 778 478 778 478 700 472 640z"
        />
        <path d="M480 687v6M480 711v6M435 780h6M453 780h6M465 780h6" stroke="#000" strokeWidth="6" />
      </g>

      {/* guides */}
      <g stroke="#00ffff" strokeWidth="2" strokeDasharray="2 2">
        <path d="M609 306H2575M609 1380H2575M906 205V1575M2374 205V1575" />
      </g>

      {/* selected data frame */}
      <rect x="1954" y="302" width="424" height="440" fill="none" stroke="#b0b0b0" strokeWidth="2" strokeDasharray="6 6" />
      <path d="M1958 306V738H2374" fill="none" stroke="#000" strokeWidth="2" />
      <path d="M1958 306V738H2374" fill="none" stroke="#17d1d6" strokeWidth="2" strokeDasharray="6 6" />
      {HANDLES.map(([x, y]) => (
        <rect key={`${x}-${y}`} x={x - 6} y={y - 6} width="12" height="12" fill="#17d1d6" stroke="#000" strokeWidth="2" />
      ))}
    </svg>
  );
}

function ViewBar() {
  return (
    <div className="flex h-[30px] shrink-0 items-center pb-1">
      <button type="button" aria-label="data view" className="ml-2">
        <svg viewBox="0 0 8 8" className="size-4">
          <rect x=".5" y=".5" width="7" height="7" fill="#a9cc7c" stroke="#333" />
          <path d="M4 7V4l2-2v5z" fill="#bfe3f5" />
        </svg>
      </button>
      <button type="button" aria-label="layout view" className="z-10 ml-[11px] flex h-8 w-[33px] items-center justify-center rounded-sm border-2 border-[#99d1ff] bg-[#cce8ff]">
        <svg viewBox="0 0 14 16" className="h-4 w-[14px]">
          <path d="M1 1h8l4 4v10H1z" fill="#fff" stroke="#333" strokeWidth="2" />
          <rect x="4" y="5" width="5" height="4" fill="#5aa0dc" />
          <path d="M4 12h2" stroke="#000" strokeWidth="2" />
          <path d="M7 12h4" stroke="#1a9cf0" strokeWidth="2" />
        </svg>
      </button>
      <div className="mx-[5px] h-[26px] w-[2px] bg-[#8a8a8a]" />
      <button type="button" aria-label="refresh" className="ml-3">
        <svg viewBox="0 0 18 16" className="h-4 w-[18px]" fill="none" stroke="#0d4480" strokeWidth="2">
          <path d="M2 7C3 2 10 0 14 4M16 9c-1 5-8 7-12 3" />
          <path d="M16 1v5h-5zM2 15v-5h5z" fill="#0d4480" stroke="none" />
        </svg>
      </button>
      <button type="button" aria-label="pause" className="ml-[18px] flex gap-1">
        <span className="h-[14px] w-1 bg-[#1c55b5]" />
        <span className="h-[14px] w-1 bg-[#1c55b5]" />
      </button>
      <div className="ml-[362px] mr-[2px] h-1 flex-1 bg-[#848484]" />
    </div>
  );
}

function ToolbarMenu() {
  return (
    <div
      role="menu"
      className="absolute left-[1279px] top-0 z-20 w-[406px] border-x-2 border-b-2 border-[#808080] bg-[#fdfdfd] pt-px shadow-[8px_8px_6px_-2px_rgba(0,0,0,0.3)]"
    >
      <div className="bg-linear-to-r from-[#fdfdfd] to-[#eeeeee] bg-[length:56px_100%] bg-no-repeat">
        {TOOLBARS.map((t) => (
          <button
            key={t.name}
            type="button"
            role="menuitemcheckbox"
            aria-checked={Boolean(t.checked)}
            className={clsx(
              "mx-[2px] flex h-[46px] w-[398px] items-center border-2 text-left",
              t.active ? "border-[#0078d7] bg-[#b3d6f2]" : "border-transparent"
            )}
          >
            <span
              className={clsx(
                "-mt-[2px] ml-1 mr-6 flex size-10 items-center justify-center",
                t.checked && "border-2 border-[#0078d7]",
                t.checked && (t.active ? "bg-[#80b9ea]" : "bg-[#deebf5]")
              )}
            >
              {t.checked && (
                <svg viewBox="0 0 16 14" className="h-3 w-[14px]">
                  <path d="M1 6l5 5 9-9" fill="none" stroke="#000" strokeWidth="3" />
                </svg>
              )}
            </span>
            {t.name}
          </button>
        ))}
        <button type="button" aria-label="scroll down" className="flex h-[78px] w-full items-end justify-center pb-3">
          <Triangle />
        </button>
      </div>
    </div>
  );
}

export default function App() {
  return (
    <div className="relative flex h-screen flex-col overflow-hidden bg-linear-to-r from-[#f0f0f0] to-[#fafafa] font-['Noto_Sans','Noto_Sans_CJK_SC',sans-serif] text-2xl text-black">
      <nav className="flex h-[53px] shrink-0 items-start gap-[34px] pl-[3px] pt-2">
        {MENUS.map((m) => (
          <button key={m} type="button" className="whitespace-nowrap">{m}</button>
        ))}
      </nav>
      <ToolbarDock />
      <main className="flex min-h-0 flex-1 gap-2 bg-[#f0f0f0]">
        <TableOfContents />
        <section className="flex min-w-0 flex-1 flex-col border-b-2 border-l-2 border-t-2 border-white border-l-[#a0a0a0] border-t-[#a0a0a0]">
          <div className="flex min-h-0 flex-1 flex-col border-b-2 border-l-2 border-t-2 border-[#e3e3e3] border-l-[#696969] border-t-[#696969]">
            <div className="h-[38px] shrink-0 overflow-hidden">
              <HorizontalRuler />
            </div>
            <div className="flex min-h-0 flex-1">
              <VerticalRuler />
              <div className="min-w-0 flex-1 border-b-2 border-l-2 border-t-2 border-white border-l-[#a0a0a0] border-t-[#a0a0a0]">
                <div className="h-full border-b-2 border-l-2 border-t-2 border-[#e3e3e3] border-l-[#696969] border-t-[#696969] bg-white">
                  <LayoutPage />
                </div>
              </div>
            </div>
            <ViewBar />
          </div>
        </section>
      </main>
      <footer className="flex h-[42px] shrink-0 items-center justify-end bg-[#f0f0f0] pr-[98px]">
        <div className="whitespace-pre border-l-2 border-[#fafafa] pl-[10px] pt-1">13.79  9.36 厘米</div>
      </footer>
      <div className="h-1 shrink-0 bg-[#46526f]" />
      <ToolbarMenu />
      <div className="pointer-events-none absolute bottom-4 right-1 z-30 font-['Roboto',sans-serif] text-[52px] leading-none font-light text-[#dcdcdc]/80 [text-shadow:1px_1px_1px_#a8a8a8]">
        CSDN @heaven_828
      </div>
    </div>
  );
}
